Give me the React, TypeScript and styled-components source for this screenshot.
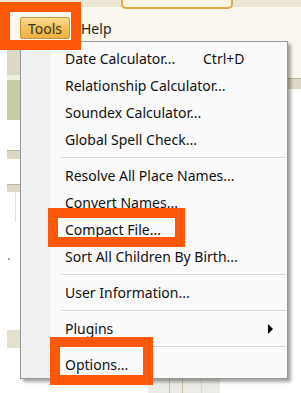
import React from 'react';
import styled, { createGlobalStyle } from 'styled-components';

const GlobalStyle = createGlobalStyle`
  html, body {
    margin: 0;
    padding: 0;
    background: #ffffff;
  }
  body {
    font-family: "Noto Sans", "Liberation Sans", sans-serif;
    overflow: hidden;
  }
`;

type Entry =
  | { kind: 'item'; label: string; shortcut?: string; submenu?: boolean }
  | { kind: 'sep' };

const entries: Entry[] = [
  { kind: 'item', label: 'Date Calculator...', shortcut: 'Ctrl+D' },
  { kind: 'item', label: 'Relationship Calculator...' },
  { kind: 'item', label: 'Soundex Calculator...' },
  { kind: 'item', label: 'Global Spell Check...' },
  { kind: 'sep' },
  { kind: 'item', label: 'Resolve All Place Names...' },
  { kind: 'item', label: 'Convert Names...' },
  { kind: 'item', label: 'Compact File...' },
  { kind: 'item', label: 'Sort All Children By Birth...' },
  { kind: 'sep' },
  { kind: 'item', label: 'User Information...' },
  { kind: 'sep' },
  { kind: 'item', label: 'Plugins', submenu: true },
  { kind: 'sep' },
  { kind: 'item', label: 'Options...' },
];

const App: React.FC = () => {
  return (
    <>
      <GlobalStyle />
      <Screen>
        <TopStrip>
          <TabEdge />
        </TopStrip>
        <MenuBar>
          <BarButton active>Tools</BarButton>
          <BarButton>Help</BarButton>
        </MenuBar>
        <Content>
          <LeftCol>
            <Block h={25} color="#dcd8c3" top={9} />
            <Block h={5} color="#efeee2" />
            <Block h={40} color="#c9cba4" />
            <Band top={30} h={9} />
            <Band top={25} h={8} />
            <VLine />
            <Dot />
            <Block h={18} color="#e3e1ce" top={70} />
          </LeftCol>
          <Middle>
            <GrayPanel>
              <PanelLine at={21} color="#c3c5a2" />
              <PanelLine at={34} color="#c3c5a2" />
              <PanelLine at={53} color="#d6d6d6" />
            </GrayPanel>
          </Middle>
          <RightCol>
            <CreamFill />
            <Band top={0} h={11} />
          </RightCol>
        </Content>

        <Dropdown>
          {entries.map((e, i) =>
            e.kind === 'sep' ? (
              <Separator key={i} />
            ) : (
              <Item key={i}>
                <Label>{e.label}</Label>
                {e.shortcut && <Shortcut>{e.shortcut}</Shortcut>}
                {e.submenu && <Arrow />}
              </Item>
            )
          )}
        </Dropdown>

        <Callout x={0} y={2} w={81} h={48} />
        <Callout x={48} y={208} w={137} h={39} />
        <Callout x={50} y={337} w={103} h={48} />
      </Screen>
    </>
  );
};

export default App;

const Screen = styled.div`
  position: relative;
  width: 301px;
  height: 393px;
  overflow: hidden;
  display: flex;
  flex-direction: column;
  background: #ffffff;
`;

const TopStrip = styled.div`
  height: 10px;
  flex: none;
  background: linear-gradient(#ebe6d3 0 7px, #f9f7ee 7px);
  display: flex;
`;

const TabEdge = styled.div`
  margin-left: 121px;
  width: 112px;
  height: 9px;
  box-sizing: border-box;
  border: 2px solid #e0ad45;
  border-top: none;
  border-radius: 0 0 5px 5px;
  background: #faf4e2;
`;

const MenuBar = styled.div`
  height: 31px;
  flex: none;
  background: #f9f7ee;
  display: flex;
  align-items: flex-start;
  padding: 7px 0 0 20px;
  box-sizing: border-box;
  gap: 2px;
`;

const BarButton = styled.div<{ active?: boolean }>`
  height: 22px;
  box-sizing: border-box;
  padding: 0 7px 0 ${(p) => (p.active ? 7 : 8)}px;
  display: flex;
  align-items: center;
  font-size: 14px;
  color: ${(p) => (p.active ? '#3b3322' : '#222222')};
  border-radius: 2px;
  border: 1px solid ${(p) => (p.active ? '#c8973a' : 'transparent')};
  background: ${(p) =>
    p.active ? 'linear-gradient(#f9dc92, #f2bf55 55%, #eeb043)' : 'transparent'};
  width: ${(p) => (p.active ? '50px' : 'auto')};
`;

const Content = styled.div`
  flex: 1;
  display: flex;
`;

const LeftCol = styled.div`
  width: 20px;
  flex: none;
  padding-left: 7px;
  box-sizing: border-box;
  display: flex;
  flex-direction: column;
`;

const Block = styled.div<{ h: number; color: string; top?: number }>`
  height: ${(p) => p.h}px;
  margin-top: ${(p) => p.top ?? 0}px;
  background: ${(p) => p.color};
  flex: none;
`;

const Band = styled.div<{ h: number; top: number }>`
  height: ${(p) => p.h}px;
  margin-top: ${(p) => p.top}px;
  box-sizing: border-box;
  border-top: 1px solid #b9b5a0;
  background: #dcd8c5;
  flex: none;
`;

const VLine = styled.div`
  width: 1px;
  height: 30px;
  margin-left: 8px;
  background: #e2e2e2;
`;

const Dot = styled.div`
  width: 2px;
  height: 2px;
  margin: 36px 0 0 1px;
  border-radius: 1px;
  background: #8a8a9a;
`;

const Middle = styled.div`
  flex: 1;
  display: flex;
  flex-direction: column;
  justify-content: flex-end;
`;

const GrayPanel = styled.div`
  position: relative;
  margin-left: 128px;
  width: 72px;
  height: 15px;
  background: #eceae4;
`;

const PanelLine = styled.div<{ at: number; color: string }>`
  position: absolute;
  top: 0;
  bottom: 0;
  left: ${(p) => p.at}px;
  width: 1px;
  background: ${(p) => p.color};
`;

const RightCol = styled.div`
  width: 13px;
  flex: none;
  display: flex;
  flex-direction: column;
`;

const CreamFill = styled.div`
  height: 37px;
  background: #f9f7ee;
`;

const Dropdown = styled.div`
  position: absolute;
  left: 20px;
  top: 41px;
  width: 268px;
  box-sizing: border-box;
  padding-top: 3px;
  border: 1px solid #979797;
  background: linear-gradient(to right, #f1f1f1 0 29px, #fafafa 29px);
  box-shadow: 3px 3px 3px rgba(0, 0, 0, 0.35);
  display: flex;
  flex-direction: column;
`;

const Item = styled.div`
  height: 27px;
  display: flex;
  align-items: center;
  padding: 0 14px 0 44px;
  font-size: 14px;
  color: #111111;
  white-space: nowrap;
`;

const Label = styled.span`
  flex: 0 0 138px;
`;

const Shortcut = styled.span`
  flex: none;
`;

const Arrow = styled.span`
  margin-left: auto;
  width: 0;
  height: 0;
  border-top: 5px solid transparent;
  border-bottom: 5px solid transparent;
  border-left: 5px solid #000000;
`;

const Separator = styled.div`
  height: 9px;
  margin: 0 1px 0 40px;
  display: flex;
  flex-direction: column;
  justify-content: center;
  &::before {
    content: '';
    height: 1px;
    background: #d7d7d7;
  }
  &::after {
    content: '';
    height: 1px;
    background: #ffffff;
  }
`;

const Callout = styled.div<{ x: number; y: number; w: number; h: number }>`
  position: absolute;
  left: ${(p) => p.x}px;
  top: ${(p) => p.y}px;
  width: ${(p) => p.w}px;
  height: ${(p) => p.h}px;
  box-sizing: border-box;
  border: 10px solid #fd5808;
`;
